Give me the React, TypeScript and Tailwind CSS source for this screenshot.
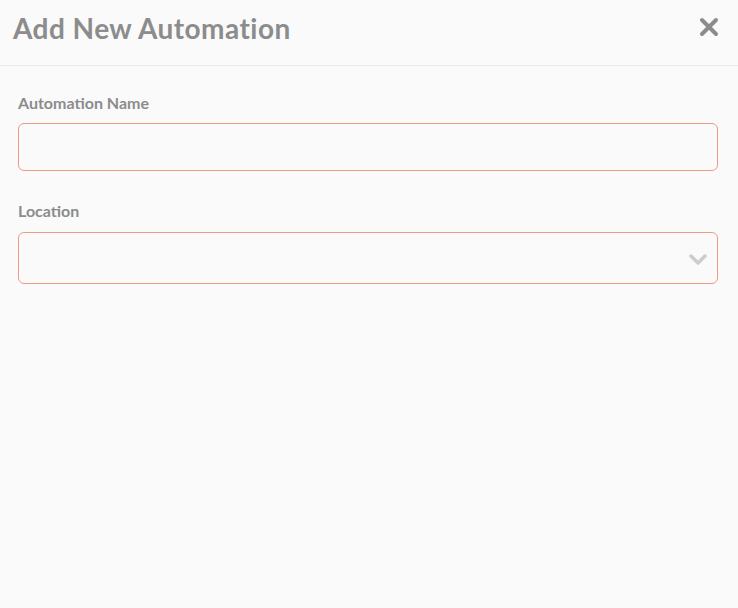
import React from "react";

function AddAutomation() {
  return (
    <div className="w-[738px] h-[608px] bg-[#fafafa] font-['Lato',sans-serif] text-[#8c8c8c]">
      <div className="flex items-start justify-between h-[66px] pt-[11px] pl-[13px] pr-[19px] border-b border-[#ececec]">
        <h1 className="text-[28px] leading-[34px] font-bold tracking-[0.45px]">Add New Automation</h1>
        <button className="mt-[6px] text-[#8c8c8c]">
          <svg width="20" height="20" viewBox="0 0 20 20">
            <path d="M3 3 L17 17 M17 3 L3 17" stroke="currentColor" strokeWidth="4" strokeLinecap="round" />
          </svg>
        </button>
      </div>
      <div className="px-[18px] pt-[27px]">
        <label className="block text-[16px] font-bold leading-[20px]">Automation Name</label>
        <input className="block w-[700px] h-[48px] mt-[10px] rounded-[6px] border border-[#ee9a87] bg-[#fafafa] outline-none" />
        <label className="block text-[16px] font-bold leading-[20px] mt-[30px]">Location</label>
        <div className="relative mt-[11px] w-[700px] h-[52px] rounded-[6px] border border-[#ee9a87]">
          <svg className="absolute right-[10px] top-[21px]" width="18" height="12" viewBox="0 0 18 12">
            <path d="M2 2 L9 9 L16 2" fill="none" stroke="#cccccc" strokeWidth="3.5" strokeLinecap="round" strokeLinejoin="round" />
          </svg>
        </div>
      </div>
    </div>
  );
}

export default function App() {
  return <AddAutomation />;
}
